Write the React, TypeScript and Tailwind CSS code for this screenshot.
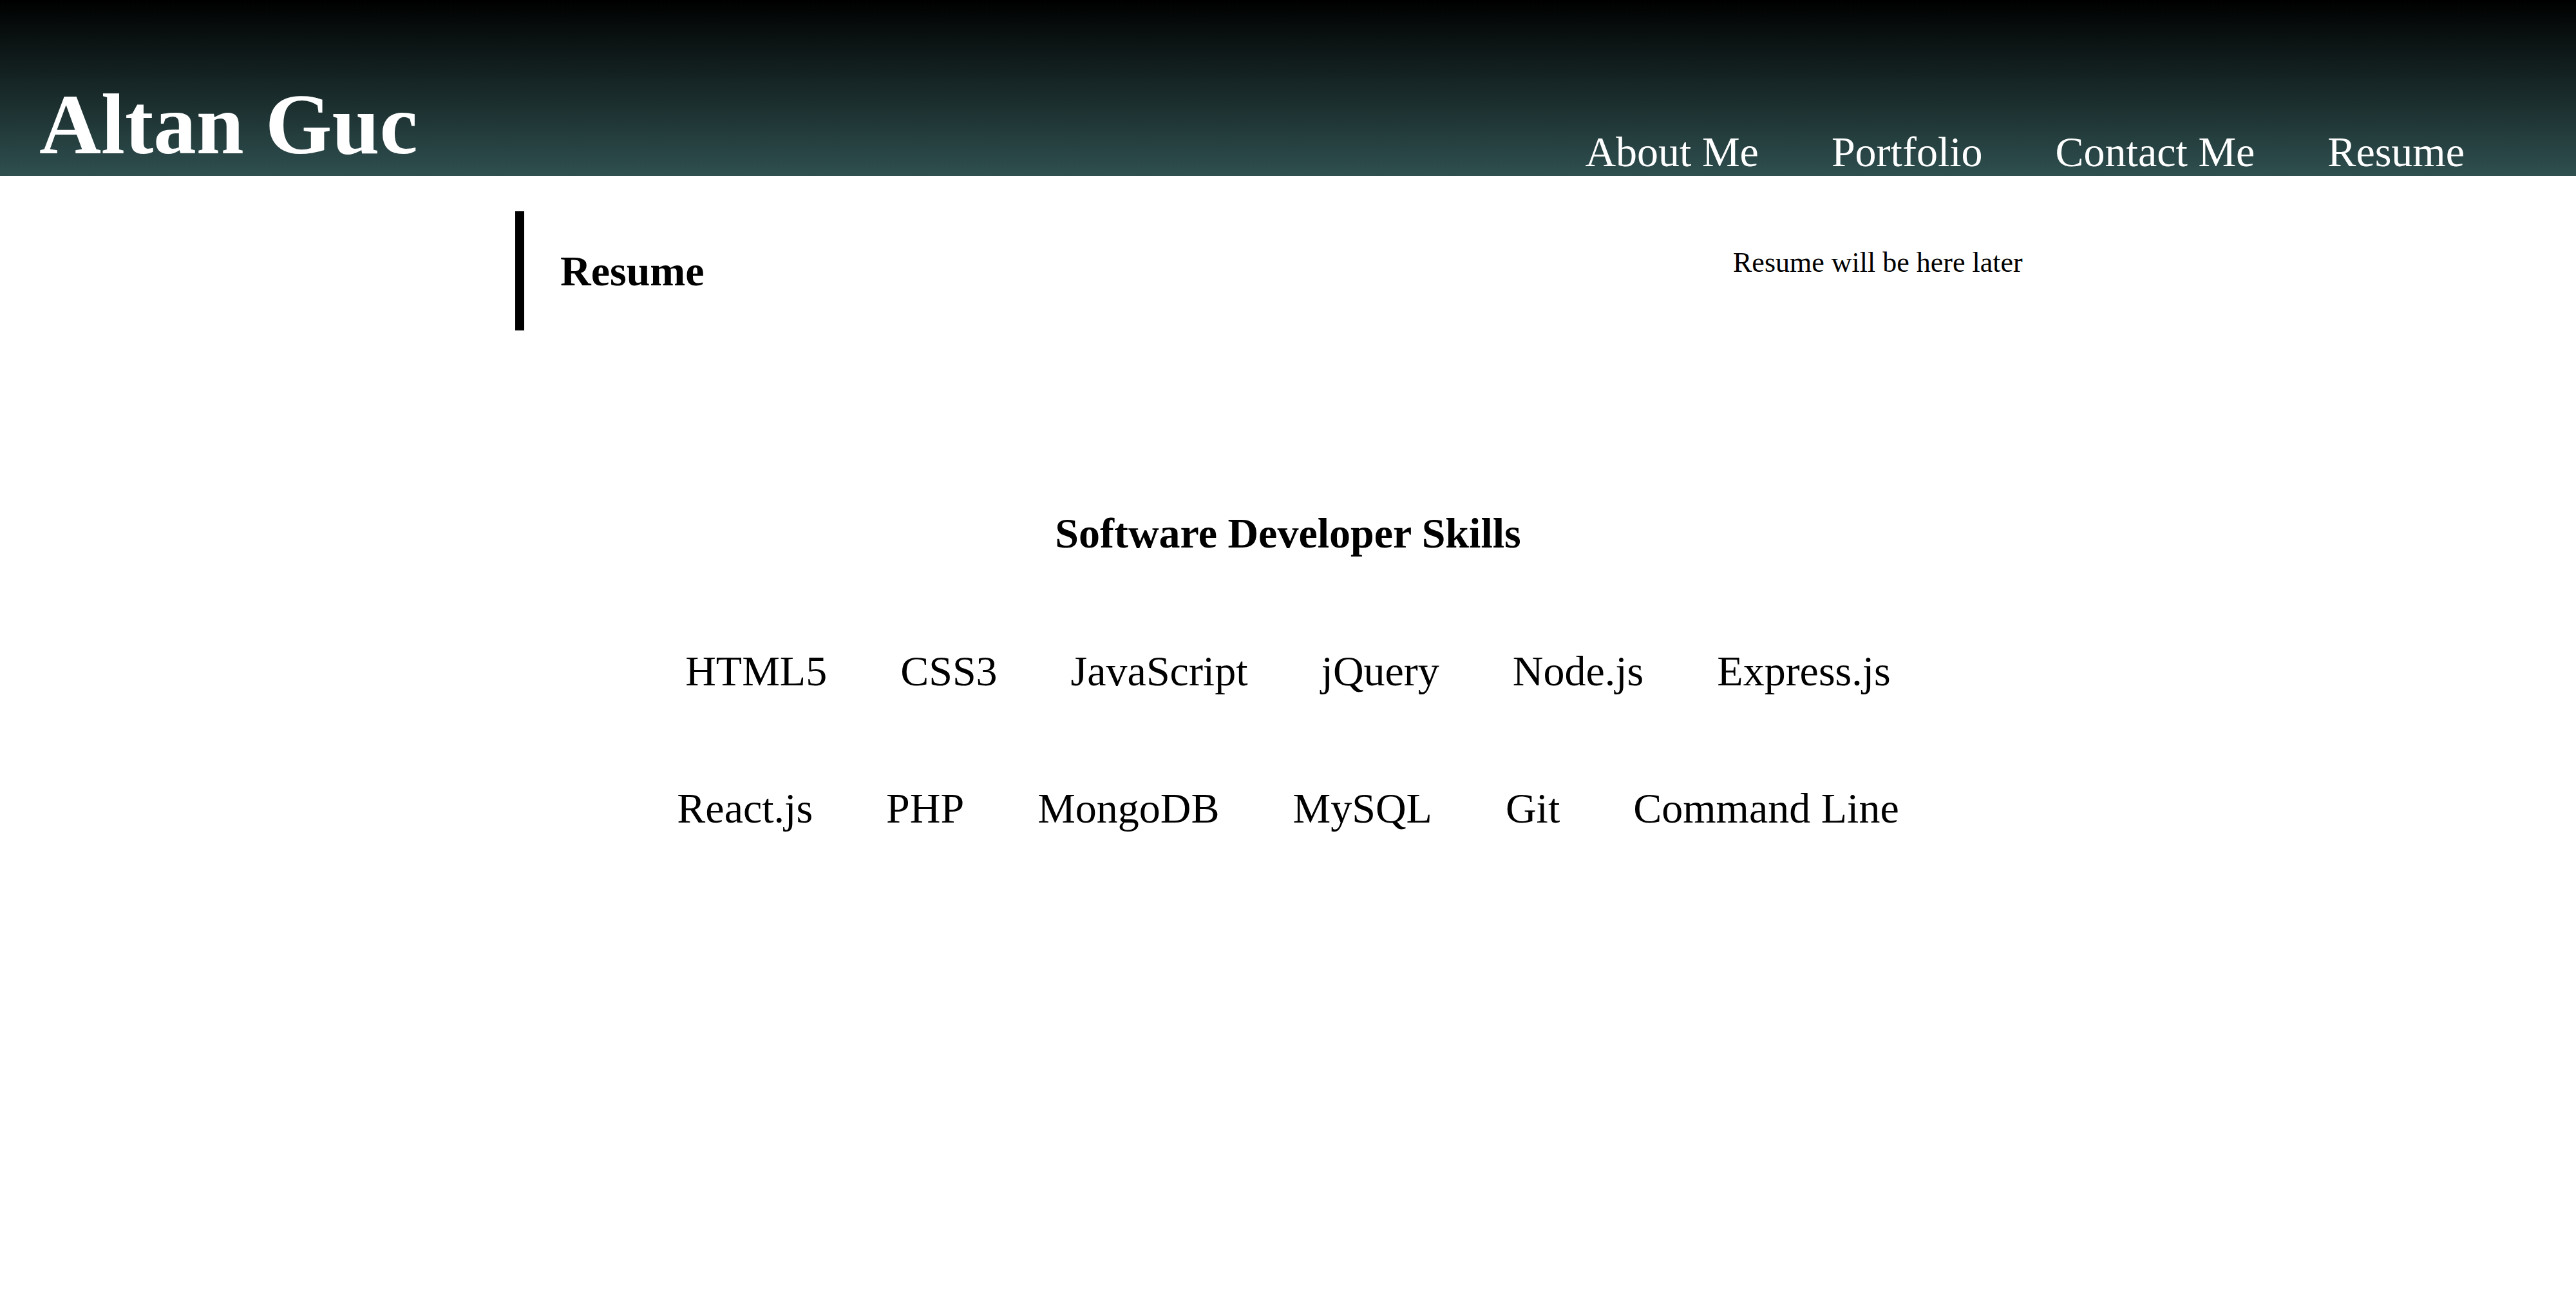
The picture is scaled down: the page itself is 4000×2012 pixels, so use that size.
const navLinks = ['About Me', 'Portfolio', 'Contact Me', 'Resume']

const skillRows = [
  ['HTML5', 'CSS3', 'JavaScript', 'jQuery', 'Node.js', 'Express.js'],
  ['React.js', 'PHP', 'MongoDB', 'MySQL', 'Git', 'Command Line'],
]

export default function App() {
  return (
    <div className="min-h-[2012px] bg-white text-black font-['Liberation_Serif',serif]">
      {/* Header */}
      <header className="flex h-[273px] items-end justify-between bg-[linear-gradient(to_bottom,#000000,#2f4f4f)] pl-[61px] pr-[173px]">
        <h1 className="mb-[13px] text-[133px] font-bold leading-none text-white">Altan Guc</h1>
        <nav className="mb-[4px] flex gap-[113px]">
          {navLinks.map((link) => (
            <a key={link} href="#" className="text-[66px] leading-none text-white">
              {link}
            </a>
          ))}
        </nav>
      </header>

      {/* Resume */}
      <section className="ml-[800px] mt-[55px] flex items-start">
        <div className="w-[1891px] border-l-[14px] border-black pb-[59px] pl-[56px] pt-[60px]">
          <h2 className="text-[66px] font-bold leading-none">Resume</h2>
        </div>
        <p className="pt-[58px] text-[44px] leading-none">Resume will be here later</p>
      </section>

      {/* Skills */}
      <section className="mt-[282px] flex flex-col items-center">
        <h2 className="text-[66px] font-bold leading-none">Software Developer Skills</h2>
        <div className="mt-[148px] flex flex-col items-center gap-[147px]">
          {skillRows.map((row, i) => (
            <ul key={i} className="flex gap-[114px]">
              {row.map((skill) => (
                <li key={skill} className="text-[66px] leading-none">
                  {skill}
                </li>
              ))}
            </ul>
          ))}
        </div>
      </section>
    </div>
  )
}
